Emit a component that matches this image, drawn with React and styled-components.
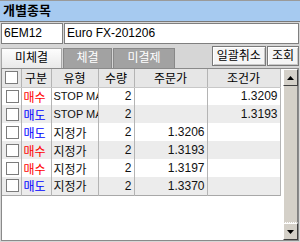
import React from 'react'
import styled, { createGlobalStyle } from 'styled-components'

const GlobalStyle = createGlobalStyle`
  body {
    margin: 0;
    background: #d6d6d6;
  }
  * { box-sizing: border-box; }
`

const FONT = `"Liberation Sans", "Noto Sans CJK KR", sans-serif`

const Window = styled.div`
  width: 300px;
  height: 242px;
  background: #d6d6d6;
  display: flex;
  flex-direction: column;
  font-family: ${FONT};
  font-size: 12px;
  color: #000;
`

const TitleBar = styled.div`
  height: 22px;
  background: #a6caf0;
  border-top: 1px solid #9a9a9a;
  border-bottom: 1px solid #7a7a7a;
  padding-left: 3px;
  font-weight: bold;
  font-size: 13px;
  line-height: 20px;
`

const InputRow = styled.div`
  display: flex;
  gap: 1px;
  margin: 1px 1px 0 1px;
  height: 21px;
`

const Field = styled.div`
  width: ${props => props.width ? props.width + 'px' : 'auto'};
  flex: ${props => props.width ? 'none' : 1};
  background: #fff;
  border: 1px solid #7f7f7f;
  padding-left: 2px;
  font-size: 12px;
  line-height: 19px;
  white-space: nowrap;
  overflow: hidden;
`

const ToolRow = styled.div`
  display: flex;
  justify-content: space-between;
  align-items: flex-end;
  height: 22px;
  margin: 2px 1px 0 1px;
`

const Tabs = styled.div`
  display: flex;
  gap: 1px;
`

const Tab = styled.div`
  width: ${props => props.width}px;
  height: 20px;
  border: 1px solid ${props => props.active ? '#a8a8a8' : '#888'};
  border-bottom: none;
  background: ${props => props.active ? 'linear-gradient(#fdfdfd, #e9e9e9)' : '#a2a2a2'};
  color: ${props => props.active ? '#000' : '#fff'};
  text-align: center;
  font-size: 12px;
  line-height: 19px;
`

const Buttons = styled.div`
  display: flex;
  gap: 1px;
  align-self: flex-start;
`

const Button = styled.div`
  height: 20px;
  padding: 0 4px;
  background: #f5f5f5;
  border: 1px solid #7a7a7a;
  box-shadow: inset 1px 1px 0 #fff, inset -1px -1px 0 #c8c8c8;
  font-size: 12px;
  line-height: 18px;
  white-space: nowrap;
`

const Panel = styled.div`
  flex: 1;
  margin: 0 1px 1px 1px;
  border: 1px solid #8a8a8a;
  background: #fff;
  display: flex;
  gap: 3px;
`

const GridArea = styled.div`
  width: 278px;
`

const Table = styled.table`
  border-collapse: collapse;
  table-layout: fixed;
  width: 278px;
  border-bottom: 1px solid #a8a8a8;
  border-right: 1px solid #a8a8a8;
`

const Head = styled.th`
  height: 18px;
  padding: 0;
  background: #e6e6e6;
  border-right: 1px solid #b4b4b4;
  border-bottom: 1px solid #c8c8c8;
  font-weight: normal;
  font-size: 12px;
  text-align: center;
  width: ${props => props.w}px;
`

const Row = styled.tr`
  background: ${props => props.shade ? '#ececec' : '#fff'};
`

const Cell = styled.td`
  height: 18px;
  padding: 0 ${props => props.align === 'right' ? '2px' : '0'} 0 2px;
  border-right: 1px solid #b4b4b4;
  text-align: ${props => props.align || 'left'};
  color: ${props => props.color || '#111'};
  font-size: ${props => props.small ? '11px' : '12px'};
  white-space: nowrap;
  overflow: hidden;
  text-overflow: clip;
`

const Check = styled.span`
  display: block;
  width: 13px;
  height: 13px;
  margin: 0 auto;
  border: 1px solid #7c7c7c;
  background: #fff;
`

const Scrollbar = styled.div`
  width: 16px;
  display: flex;
  flex-direction: column;
`

const ArrowBtn = styled.div`
  height: 17px;
  background: #d4d0c8;
  border: 1px solid;
  border-color: #fff #404040 #404040 #fff;
  display: flex;
  align-items: center;
  justify-content: center;
`

const Track = styled.div`
  flex: 1;
  background: #d4d0c8;
  border-left: 1px solid #fff;
  border-right: 1px solid #808080;
  border-bottom: 1px dotted #fff;
`

const Arrow = ({ down }) => (
  <svg width="7" height="4" viewBox="0 0 7 4">
    <polygon points={down ? '0,0 7,0 3.5,4' : '3.5,0 7,4 0,4'} fill="#000" />
  </svg>
)

const rows = [
  { side: '매수', type: 'STOP MARKET', qty: 2, price: '', cond: '1.3209' },
  { side: '매도', type: 'STOP MARKET', qty: 2, price: '', cond: '1.3193' },
  { side: '매도', type: '지정가', qty: 2, price: '1.3206', cond: '' },
  { side: '매수', type: '지정가', qty: 2, price: '1.3193', cond: '' },
  { side: '매수', type: '지정가', qty: 2, price: '1.3197', cond: '' },
  { side: '매도', type: '지정가', qty: 2, price: '1.3370', cond: '' }
]

export default function App () {
  return (
    <Window>
      <GlobalStyle />
      <TitleBar>개별종목</TitleBar>
      <InputRow>
        <Field width={62}>6EM12</Field>
        <Field>Euro FX-201206</Field>
      </InputRow>
      <ToolRow>
        <Tabs>
          <Tab active width={61}>미체결</Tab>
          <Tab width={49}>체결</Tab>
          <Tab width={62}>미결제</Tab>
        </Tabs>
        <Buttons>
          <Button>일괄취소</Button>
          <Button>조회</Button>
        </Buttons>
      </ToolRow>
      <Panel>
        <GridArea>
          <Table>
            <thead>
              <tr>
                <Head w={19}><Check /></Head>
                <Head w={30}>구분</Head>
                <Head w={47}>유형</Head>
                <Head w={36}>수량</Head>
                <Head w={73}>주문가</Head>
                <Head w={73}>조건가</Head>
              </tr>
            </thead>
            <tbody>
              {rows.map((r, i) => (
                <Row key={i} shade={i % 2 === 1}>
                  <Cell><Check /></Cell>
                  <Cell color={r.side === '매수' ? '#ff0000' : '#0000ff'}>{r.side}</Cell>
                  <Cell small={r.type.startsWith('STOP')}>{r.type}</Cell>
                  <Cell align='right'>{r.qty}</Cell>
                  <Cell align='right'>{r.price}</Cell>
                  <Cell align='right'>{r.cond}</Cell>
                </Row>
              ))}
            </tbody>
          </Table>
        </GridArea>
        <Scrollbar>
          <ArrowBtn><Arrow /></ArrowBtn>
          <Track />
          <ArrowBtn><Arrow down /></ArrowBtn>
        </Scrollbar>
      </Panel>
    </Window>
  )
}
